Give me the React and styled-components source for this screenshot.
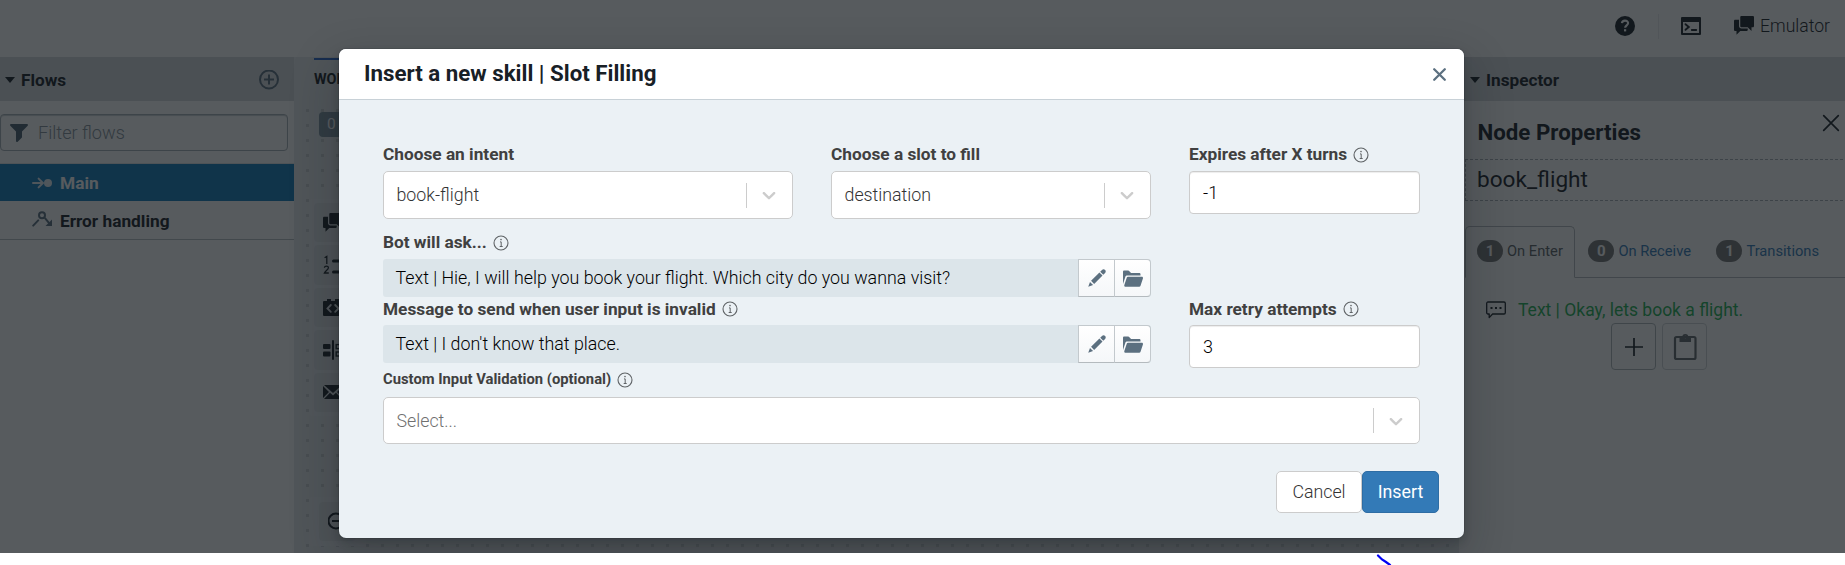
import React from 'react';
import styled, { createGlobalStyle } from 'styled-components';

const GlobalStyle = createGlobalStyle`
  *, *::before, *::after { box-sizing: border-box; }
  body { margin: 0; background: #fff; font-family: Roboto, "Liberation Sans", sans-serif; font-weight: 300; color: #182026; }
  svg { display: block; flex: none; }
  button, input { font: inherit; color: inherit; margin: 0; }
`;

/* ---------- icons ---------- */

const Icon = ({ size = 20, box = 20, children, ...rest }) => (
  <svg width={size} height={size} viewBox={`0 0 ${box} ${box}`} fill="currentColor" {...rest}>{children}</svg>
);
const line = { fill: 'none', stroke: 'currentColor' };

const AddCircle = () => <Icon><circle cx="10" cy="9.500" r="9" {...line} strokeWidth="2" /><path d="M10 4.500v10M5 9.500h10" {...line} strokeWidth="2" /></Icon>;
const Filter = () => <Icon><path d="M18 1H2a1 1 0 00-.71 1.71L7 8.41V18a1 1 0 001.71.71l4-4c.18-.19.29-.44.29-.71V8.41l5.71-5.71A1 1 0 0018 1z" /></Icon>;
const Chat = () => <Icon box={16}><path d="M6 10c-1.1 0-2-.9-2-2V3H1c-.55 0-1 .45-1 1v7c0 .55.45 1 1 1h1v3.02L5.02 12H10c.55 0 1-.45 1-1v-1H6zm9-10H6c-.55 0-1 .45-1 1v7c0 .55.45 1 1 1h4.98L14 12.02V9h1c.55 0 1-.45 1-1V1c0-.55-.45-1-1-1z" /></Icon>;
const Help = () => (
  <Icon><circle cx="10" cy="10" r="10" /><path d="M6.9 7.2c.2-1.9 1.5-2.6 3.1-2.6 1.8 0 3.1.9 3.1 2.5 0 2.2-2.9 2.3-3 4.7" fill="none" stroke="#fff" strokeWidth="2.1" /><rect x="9" y="13.2" width="2.2" height="2.2" fill="#fff" /></Icon>
);
const Terminal = () => (
  <Icon><path fillRule="evenodd" d="M1 1h18a1 1 0 011 1v16a1 1 0 01-1 1H1a1 1 0 01-1-1V2a1 1 0 011-1zm1 5v11h16V6z" /><path d="M4.5 8.2L7.8 11l-3.3 2.8" {...line} strokeWidth="1.9" strokeLinecap="round" /><path d="M10.8 14h4.4" {...line} strokeWidth="1.9" strokeLinecap="round" /></Icon>
);
const FlowEnd = () => <Icon><path d="M1 10h9M6.6 5.6L11 10l-4.4 4.4" {...line} strokeWidth="2" strokeLinecap="round" /><circle cx="16" cy="10" r="4" /></Icon>;
const FlowBranch = () => <Icon><path d="M1.2 14.6L6.2 9.400M13.200 7.400l4.500 5.500" {...line} strokeWidth="2" strokeLinecap="round" /><circle cx="10" cy="4.3" r="3" {...line} strokeWidth="2" /><path d="M20 8.500V15H13.500z" /></Icon>;
const Numbered = () => <Icon><path d="M1.6 2.8L3.8 1.4V9M1.4 12.7c.2-2.2 4-2.2 4 0 0 1.8-3 3.2-4 5.3h4.4" {...line} strokeWidth="1.3" /><path d="M10.500 6h10M10.500 17h10" {...line} strokeWidth="3" strokeLinecap="round" /></Icon>;
const CodeBlock = () => <Icon><path d="M1 4h3V2h4v2h4V2h4v2h3a1 1 0 011 1v13a1 1 0 01-1 1H1a1 1 0 01-1-1V5a1 1 0 011-1z" /><path d="M7.8 8L4.5 11.4l3.3 3.4M12.2 8l3.3 3.4-3.3 3.4" fill="none" stroke="#dfe3e6" strokeWidth="1.9" strokeLinecap="round" /></Icon>;
const Split = () => <Icon><rect x="0" y="4" width="7.5" height="5" rx="1" /><rect x="0" y="11.5" width="7.5" height="5" rx="1" /><rect x="9" y="0" width="2" height="20" rx="1" /><rect x="13.2" y="4.6" width="6" height="4" {...line} strokeWidth="1.4" /><rect x="13.2" y="12" width="6" height="4" {...line} strokeWidth="1.4" /></Icon>;
const Envelope = () => <Icon><path d="M0 4l6 5.9L0 16zM1 3h18l-9 8zM20 4l-6 5.9L20 16zM7 10.8l3 2.6 3-2.6 6 6.2H1z" /></Icon>;
const ZoomOut = () => <Icon><circle cx="8" cy="9" r="7.5" {...line} strokeWidth="2" /><path d="M4 9h8M13.500 14.500l5 4.500" {...line} strokeWidth="2" /></Icon>;
const Pencil = () => <Icon box={16}><path d="M3.25 10.26l2.47 2.47 6.69-6.69-2.46-2.48-6.7 6.7zM.99 14.99l3.86-1.39-2.46-2.44L.99 15zm12.25-14c-.48 0-.92.2-1.24.51l-1.44 1.44 2.47 2.47 1.44-1.44c.32-.32.51-.75.51-1.24.01-.95-.77-1.74-1.74-1.74z" /></Icon>;
const Folder = () => <Icon box={16}><path d="M2.06 6.69c.14-.4.5-.69.94-.69h11V5c0-.55-.45-1-1-1H6.41l-1.7-1.71A.997.997 0 004 2H1c-.55 0-1 .45-1 1v9.84l2.05-6.15h.01zM16 8c0-.55-.45-1-1-1H4a.99.99 0 00-.94.69l-2 6c-.04.09-.06.2-.06.31 0 .55.45 1 1 1h11c.44 0 .81-.29.94-.69l2-6c.04-.09.06-.2.06-.31z" /></Icon>;
const Chevron = () => <Icon size={22}><path d="M4.516 7.548c.436-.446 1.043-.481 1.576 0L10 11.295l3.908-3.747c.533-.481 1.141-.446 1.574 0 .436.445.408 1.197 0 1.615-.406.418-4.695 4.502-4.695 4.502a1.095 1.095 0 01-1.576 0S4.924 9.581 4.516 9.163s-.436-1.17 0-1.615z" /></Icon>;
const Cross = ({ size, weight }) => <Icon size={size} box={16}><path d="M1.5 1.5l13 13M14.5 1.5L1.5 14.5" {...line} strokeWidth={weight} strokeLinecap="round" /></Icon>;
const Plus = () => <Icon size={18} box={18}><path d="M9 0v18M0 9h18" {...line} strokeWidth="1.7" /></Icon>;
const Speech = () => <Icon><path d="M2 2h16a1.3 1.3 0 011.3 1.3v9.4A1.3 1.3 0 0118 14H6.6l-3.4 3.6V14H2A1.3 1.3 0 01.7 12.7V3.3A1.3 1.3 0 012 2z" {...line} strokeWidth="1.3" strokeLinejoin="round" /><path d="M4.5 7h2v2h-2zM9 7h2v2H9zM13.5 7h2v2h-2z" /></Icon>;
const Clipboard = () => <Icon size={28} box={28}><rect x="4" y="4" width="20.5" height="22" rx="1.5" {...line} strokeWidth="2.2" /><path fillRule="evenodd" d="M8.5 4h2.8a3 3 0 016 0H20v5H8.500zM14.300 2.800a1.200 1.200 0 100 2.400 1.200 1.200 0 000-2.400z" /></Icon>;
const Info = () => <Icon size={16} box={16}><circle cx="8" cy="8" r="7" {...line} strokeWidth="1.1" /><path d="M7 6.9h1.200v4.500M6.700 11.500h3" {...line} strokeWidth="1" /><circle cx="8" cy="4.6" r=".8" /></Icon>;
const Caret = () => <Icon size={10} box={10}><path d="M0 2h10L5 8z" /></Icon>;

/* ---------- application behind the dialog ---------- */

const Screen = styled.div`
  position: relative;
  height: 553px;
  overflow: hidden;
  display: flex;
  flex-direction: column;
`;
const TopBar = styled.header`
  height: 57px;
  padding: 0 15px 12px 0;
  display: flex;
  align-items: center;
  justify-content: flex-end;
  font-size: 17.6px;
`;
const TopDivider = styled.span`
  width: 1px; height: 25px; margin: 7px 22px 0 23px; background: #eaecee;
`;
const TopItem = styled.span`
  display: flex; align-items: center; gap: 6px; padding-top: 7px; margin-left: ${p => p.$left || 0}px;
`;
const Workspace = styled.div`
  flex: 1;
  min-height: 0;
  display: flex;
`;
const Sidebar = styled.aside`
  width: 294px; background: #fff;
`;
const Inspector = styled.aside`
  width: 386px; background: #fff;
`;
const PanelHeader = styled.div`
  height: 44px;
  padding: 1px 15px 0 ${p => p.$left}px;
  display: flex;
  align-items: center;
  gap: 6px;
  background: #d7dade;
  font-size: 17.2px;
  font-weight: 700;
  > span { flex: 1; padding-top: 1px; }
  > svg:last-child:not(:first-child) { color: #5c7080; }
`;
const FilterBox = styled.label`
  display: flex; align-items: center; gap: 9px;
  width: 288px; height: 37px; margin: 13px 0 12px; padding-left: 8px;
  border: 1px solid #a9b1b7; border-radius: 4px; box-shadow: inset 0 1px 1px #c9ced1;
  color: #4b5f70; font-size: 18.1px;
  input { flex: 1; min-width: 0; border: 0; padding: 0; background: none; outline: none; }
  input::placeholder { color: #85919a; opacity: 1; }
`;
const FlowList = styled.nav`
  border-top: 1px solid #dfe3e6; border-bottom: 1px solid #b9bfc4;
`;
const FlowRow = styled.div`
  height: ${p => (p.$active ? 37 : 38)}px;
  padding: ${p => (p.$active ? 1 : 2)}px 0 0 32px;
  display: flex; align-items: center; gap: 8px;
  font-size: 17.3px; font-weight: 700;
  background: ${p => (p.$active ? '#137cbd' : 'transparent')};
  color: ${p => (p.$active ? '#fff' : '#182026')};
  svg { color: ${p => (p.$active ? '#e4edf4' : '#5c7080')}; }
`;

const Canvas = styled.main`
  flex: 1; min-width: 0;
  display: flex; flex-direction: column; align-items: flex-start;
  background: #e8eaed;
`;
const CanvasTabs = styled.div`
  height: 44px; margin-left: 20px; padding-top: 1px; font-size: 14.4px; font-weight: 700;
  span { display: block; padding-top: 11px; border-top: 2px solid #2965cc; }
`;
const Grid = styled.div`
  flex: 1; width: 100%;
  display: flex; flex-direction: column; align-items: flex-start;
  background: radial-gradient(circle, #cdd1d4 1.5px, transparent 1.8px) 6px 2px / 15px 15px;
`;
const CountBadge = styled.span`
  margin: 11px 0 62px 25px; padding: 3px 8px; height: 25px; width: 40px; border-radius: 4px;
  background: #8093a2; color: #fff; font-size: 15.500px; line-height: 18px; font-weight: 400;
`;
const ToolPanel = styled.div`
  display: flex; flex-direction: column; gap: 3px;
  margin-left: 15px; padding: ${p => (p.$zoom ? '5px 10px' : '4px 5px')};
  margin-top: ${p => (p.$zoom ? 81 : 0)}px;
  background: #eceef0; border-radius: 3px;
`;
const Tool = styled.span`
  width: 37px; height: 39.4px; display: grid; place-items: center; border-radius: 4px; background: #e1e5e8;
`;

const NodeTitle = styled.div`
  display: flex; align-items: flex-start; justify-content: space-between;
  height: 58px; padding: 13px 5px 0 18.5px;
  h3 { margin: 5px 0 0; font-size: 22.3px; line-height: 26px; font-weight: 700; }
`;
const NodeName = styled.div`
  height: 42px; margin: 0 2px 0 6px; padding: 6px 12px 0 11px;
  border: 1px dashed #a9afb4; border-right: 0; font-size: 22.6px; line-height: 28px; font-weight: 400;
`;
const Tabs = styled.div`
  display: flex; height: 52px; margin: 25px 0 0 6px; border-bottom: 1px solid #b5babe;
`;
const Tab = styled.div`
  display: flex; align-items: center; gap: 4px; height: 52px; padding: 0 ${p => (p.$active ? 11 : 12)}px 2px;
  margin-right: 1.5px; font-size: 14.7px; font-weight: 400;
  color: ${p => (p.$active ? '#5b6267' : '#337ab7')};
  ${p => p.$active && 'border: 1px solid #b5babe; border-bottom-color: #fff; border-radius: 5px 5px 0 0; background: #fff;'}
`;
const Pill = styled.b`
  width: 26px; height: 22px; border-radius: 11px; display: grid; place-items: center;
  background: #777; color: #fff; font-size: 15px; line-height: 1;
`;
const ActionRow = styled.div`
  display: flex; align-items: center; gap: 12px; height: 30px; margin: 16px 0 0 27px; padding-top: 1px; font-size: 17.5px;
  color: #1fb254; font-weight: 400;
  svg { color: #182026; }
`;
const ActionButtons = styled.div`
  display: flex; gap: 6px; padding-left: 152px; margin-top: -1px;
`;
const SquareButton = styled.button`
  width: 45px; height: 47px; padding: 0; display: grid; place-items: center;
  border: 1px solid ${p => (p.$muted ? '#d0d4d7' : '#afb5b9')}; border-radius: 4px; background: transparent;
  color: ${p => (p.$muted ? '#62686c' : '#182026')};
`;

/* ---------- dialog ---------- */

const Overlay = styled.div`
  position: absolute; inset: 0;
  padding: 49px 0 0 339px;
  background: rgba(16, 22, 26, 0.7);
`;
const Dialog = styled.section`
  width: 1125px; height: 489px;
  background: #ebf1f5; border-radius: 7px;
  box-shadow: 0 0 0 1px rgba(16,22,26,.1), 0 4px 8px rgba(16,22,26,.2), 0 18px 46px 6px rgba(16,22,26,.2);
`;
const DialogHeader = styled.header`
  display: flex; align-items: center; justify-content: space-between;
  height: 51px; padding: 0 18px 0 25px;
  background: #fff; border-radius: 7px 7px 0 0; border-bottom: 1px solid #c8d1d7;
  h2 { margin: 0 0 2px; font-size: 22.3px; line-height: 28px; font-weight: 700; }
  svg { color: #5c7080; }
`;
const Form = styled.div`
  display: grid;
  grid-template-columns: 410px 320px 231px;
  column-gap: 38px;
  padding: 41px 44px 0;
`;
const Field = styled.div`
  grid-column: ${p => p.$col || 'auto'};
  height: ${p => p.$height}px;
`;
const MessageField = styled(Field)`
  width: 768px;
`;
const Label = styled.div`
  display: flex; align-items: center; gap: 6px;
  height: ${p => p.$height || 30}px; padding-bottom: ${p => p.$drop || 4}px;
  font-size: ${p => p.$size || 17.25}px; font-weight: 700; color: #404040; white-space: nowrap;
  svg { color: #5f6366; margin-top: 1px; }
`;
const Select = styled.div`
  display: flex; align-items: center;
  height: ${p => p.$height || 48}px; padding-left: 12.5px;
  border: 1px solid #ccc; border-radius: 5px; background: #fff;
  font-size: 17.8px; color: ${p => (p.$empty ? '#707070' : '#333')};
  > span { flex: 1; padding-bottom: ${p => (p.$empty ? 0 : 1)}px; }
  > i { width: 1px; height: 25px; background: #ccc; }
  > svg { margin: 0 12px 0 11px; color: #ccc; }
`;
const NumberInput = styled.input`
  display: block; width: 100%; height: 43px; padding: 0 13px;
  border: 1px solid #ccc; border-radius: 4px; background: #fff; box-shadow: inset 0 1px 1px rgba(0,0,0,.075);
  font-size: 18px; color: #000; outline: none;
`;
const Message = styled.div`
  display: flex; height: 38px; border-radius: 3px; background: #dce5ea; font-size: 17.82px; color: #000;
  > span { flex: 1; padding-left: 12.5px; line-height: 38px; white-space: nowrap; }
`;
const IconButton = styled.button`
  width: 37px; padding: 0; display: grid; place-items: center;
  border: 1px solid #c3c9cd; border-bottom-color: #b4babe; margin-left: ${p => (p.$last ? -1 : 0)}px;
  border-radius: ${p => (p.$last ? '0 4px 4px 0' : 0)};
  background: linear-gradient(#fff, #f5f7f9); color: #5c7080;
`;
const Footer = styled.footer`
  display: flex; justify-content: flex-end; gap: 0; padding: 27px 25px 0;
`;
const Button = styled.button`
  width: ${p => (p.$primary ? 77 : 86)}px; height: 42px; padding: 0 0 1px; border-radius: 5px; font-size: 17.8px;
  border: 1px solid ${p => (p.$primary ? '#2e6da4' : '#ccc')};
  background: ${p => (p.$primary ? '#337ab7' : '#fff')};
  color: ${p => (p.$primary ? '#fff' : '#333')};
  font-weight: ${p => (p.$primary ? 400 : 300)};
`;
const Margin = styled.div`
  height: 12px; padding-left: 1376px;
`;

const Dropdown = ({ children, ...rest }) => (
  <Select {...rest}><span>{children}</span><i /><Chevron /></Select>
);
const BotMessage = ({ children }) => (
  <Message><span>{children}</span><IconButton><Pencil /></IconButton><IconButton $last><Folder /></IconButton></Message>
);

export default function App() {
  return (
    <>
      <GlobalStyle />
      <Screen>
        <TopBar>
          <TopItem><Help /></TopItem>
          <TopDivider />
          <TopItem><Terminal /></TopItem>
          <TopItem $left={33}><Chat />Emulator</TopItem>
        </TopBar>
        <Workspace>
          <Sidebar>
            <PanelHeader $left={5}><Caret /><span>Flows</span><AddCircle /></PanelHeader>
            <FilterBox><Filter /><input placeholder="Filter flows" /></FilterBox>
            <FlowList>
              <FlowRow $active><FlowEnd />Main</FlowRow>
              <FlowRow><FlowBranch />Error handling</FlowRow>
            </FlowList>
          </Sidebar>
          <Canvas>
            <CanvasTabs><span>WOR</span></CanvasTabs>
            <Grid>
              <CountBadge>0</CountBadge>
              <ToolPanel>
                <Tool><Chat /></Tool>
                <Tool><Numbered /></Tool>
                <Tool><CodeBlock /></Tool>
                <Tool><Split /></Tool>
                <Tool><Envelope /></Tool>
              </ToolPanel>
              <ToolPanel $zoom><Tool><ZoomOut /></Tool></ToolPanel>
            </Grid>
          </Canvas>
          <Inspector>
            <PanelHeader $left={11}><Caret /><span>Inspector</span></PanelHeader>
            <NodeTitle><h3>Node Properties</h3><Cross size={18} weight={1.5} /></NodeTitle>
            <NodeName>book_flight</NodeName>
            <Tabs>
              <Tab $active><Pill>1</Pill>On Enter</Tab>
              <Tab><Pill>0</Pill>On Receive</Tab>
              <Tab><Pill>1</Pill>Transitions</Tab>
            </Tabs>
            <ActionRow><Speech />Text | Okay, lets book a flight.</ActionRow>
            <ActionButtons>
              <SquareButton><Plus /></SquareButton>
              <SquareButton $muted><Clipboard /></SquareButton>
            </ActionButtons>
          </Inspector>
        </Workspace>
        <Overlay>
          <Dialog>
            <DialogHeader><h2>Insert a new skill | Slot Filling</h2><Cross size={13} weight={2.8} /></DialogHeader>
            <Form>
              <Field $height={88}><Label>Choose an intent</Label><Dropdown>book-flight</Dropdown></Field>
              <Field $height={88}><Label>Choose a slot to fill</Label><Dropdown>destination</Dropdown></Field>
              <Field $height={88}><Label>Expires after X turns <Info /></Label><NumberInput defaultValue="-1" /></Field>
              <MessageField $col="1 / 4" $height={68}><Label>Bot will ask... <Info /></Label><BotMessage>Text | Hie, I will help you book your flight. Which city do you wanna visit?</BotMessage></MessageField>
              <MessageField $col="1 / 3" $height={73}><Label $height={28} $drop={5}>Message to send when user input is invalid <Info /></Label><BotMessage>Text | I don't know that place.</BotMessage></MessageField>
              <Field $height={73}><Label $height={28} $drop={5}>Max retry attempts <Info /></Label><NumberInput defaultValue="3" /></Field>
              <Field $col="1 / 4" $height={74}><Label $height={27} $size={14.8} $drop={9}>Custom Input Validation (optional) <Info /></Label><Dropdown $height={47} $empty>Select...</Dropdown></Field>
            </Form>
            <Footer><Button>Cancel</Button><Button $primary>Insert</Button></Footer>
          </Dialog>
        </Overlay>
      </Screen>
      <Margin>
        <svg width="16" height="12" viewBox="0 0 16 12"><path d="M2 2.5L6 6.5L10 9L14 12" fill="none" stroke="#0000f5" strokeWidth="2.2" strokeLinecap="round" /></svg>
      </Margin>
    </>
  );
}
